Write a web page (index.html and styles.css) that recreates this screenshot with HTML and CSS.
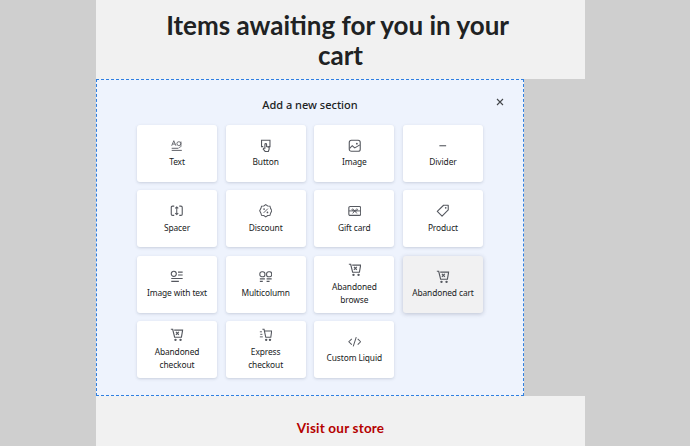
FILE: index.html
```html
<!DOCTYPE html>
<html lang="en">
<head>
<meta charset="utf-8">
<title>Add a new section</title>
<link rel="stylesheet" href="styles.css">
</head>
<body>
<svg class="defs" width="0" height="0" aria-hidden="true">
  <symbol id="cart" viewBox="0 0 16 16">
    <path d="M1 1.500h2.200L5.500 11h8l1.500-8.500H5" fill="none" stroke="currentColor" stroke-width="1.400"/>
    <path d="M7 4.500l3.500 3.500M10.500 4.500L7 8" fill="none" stroke="currentColor" stroke-width="1.300"/>
    <circle cx="6.500" cy="14" r="1.400" fill="currentColor"/>
    <circle cx="12.500" cy="14" r="1.400" fill="currentColor"/>
  </symbol>
</svg>
<main class="page">
  <header class="top">
    <h1 class="top-title">Items awaiting for you in your&nbsp;<br>cart</h1>
  </header>
  <section class="panel">
    <div class="panel-head">
      <h2 class="panel-title">Add a new section</h2>
      <button class="close" aria-label="Close"><svg viewBox="0 0 10 10" width="10" height="10"><path d="M2 2l6 6M8 2l-6 6" stroke="currentColor" stroke-width="1.100" fill="none"/></svg></button>
    </div>
    <div class="grid">
      <div class="card"><svg class="icon" viewBox="0 0 16 16"><path d="M2 8l2.500-6L7 8M3 6h3" fill="none" stroke="currentColor" stroke-width="1"/><circle cx="10.500" cy="5.500" r="2.300" fill="none" stroke="currentColor"/><path d="M13 3v5c0 1.500-1 2-2.500 2" fill="none" stroke="currentColor"/><path d="M2 11h8M2 13.500h12" stroke="currentColor" stroke-width="1.100"/></svg><span class="label">Text</span></div>
      <div class="card"><svg class="icon" viewBox="0 0 16 16"><path d="M5 9H3V1.500h10V9h-2" fill="none" stroke="currentColor" stroke-width="1.300"/><path d="M7 11V6.500a1 1 0 0 1 2 0V9l3 .8V12l-1 3H7.500L5 12l.5-1z" fill="none" stroke="currentColor" stroke-width="1.300"/></svg><span class="label">Button</span></div>
      <div class="card"><svg class="icon" viewBox="0 0 16 16"><rect x="1.500" y="1.500" width="13" height="13" rx="2.500" fill="none" stroke="currentColor" stroke-width="1.300"/><path d="M2 11l3-3 3 2.500 6-3.500" fill="none" stroke="currentColor" stroke-width="1.200"/><circle cx="10.500" cy="5.500" r="1.100" fill="currentColor"/></svg><span class="label">Image</span></div>
      <div class="card"><svg class="icon" viewBox="0 0 16 16"><path d="M4 8h8" stroke="currentColor" stroke-width="1.300"/></svg><span class="label">Divider</span></div>

      <div class="card"><svg class="icon" viewBox="0 0 16 16"><path d="M5 2.500H3a1.500 1.500 0 0 0-1.500 1.500v8A1.500 1.500 0 0 0 3 13.500h2M11 2.500h2A1.500 1.500 0 0 1 14.500 4v8a1.500 1.500 0 0 1-1.500 1.500h-2" fill="none" stroke="currentColor" stroke-width="1.300"/><path d="M8 3.500v9M6.200 5.300L8 3.500l1.800 1.800M6.200 10.700L8 12.500l1.800-1.800" fill="none" stroke="currentColor" stroke-width="1.200"/></svg><span class="label">Spacer</span></div>
      <div class="card"><svg class="icon" viewBox="0 0 16 16"><path d="M8 .8l2.300 1.500 2.700.2.700 2.600L15.200 8l-1.500 2.900-.7 2.600-2.700.2L8 15.200l-2.300-1.500-2.700-.2-.7-2.600L.8 8l1.500-2.900.7-2.600 2.700-.2z" fill="none" stroke="currentColor" stroke-width="1.200"/><path d="M10.500 5.500l-5 5" stroke="currentColor" stroke-width="1.100"/><circle cx="6" cy="6" r="1" fill="currentColor"/><circle cx="10" cy="10" r="1" fill="currentColor"/></svg><span class="label">Discount</span></div>
      <div class="card"><svg class="icon" viewBox="0 0 16 16"><rect x="1" y="3" width="14" height="10.500" rx="1.500" fill="none" stroke="currentColor" stroke-width="1.300"/><path d="M1 8.200h14" stroke="currentColor" stroke-width="1.100"/><path d="M8 8.200C6 5 4.200 5.600 4.800 7.200 5.100 8 7 8.200 8 8.200c2-3.200 3.800-2.600 3.200-1-.3.800-2.200 1-3.200 1zM5.500 11.200L8 8.200l2.500 3" fill="none" stroke="currentColor" stroke-width="1.100"/></svg><span class="label">Gift card</span></div>
      <div class="card"><svg class="icon" viewBox="0 0 16 16"><path d="M9 1.500h5.500V7l-7.300 7.500-5.700-5.700z" fill="none" stroke="currentColor" stroke-width="1.300" stroke-linejoin="round"/><circle cx="11.500" cy="4.500" r="1" fill="currentColor"/></svg><span class="label">Product</span></div>

      <div class="card"><svg class="icon" viewBox="0 0 16 16"><circle cx="4.500" cy="4.500" r="3" fill="none" stroke="currentColor" stroke-width="1.300"/><path d="M9.500 2.500H15M9.500 6H15M1.500 10H15M1.500 13.500h9" stroke="currentColor" stroke-width="1.300"/></svg><span class="label">Image with text</span></div>
      <div class="card"><svg class="icon" viewBox="0 0 16 16"><rect x="1" y="2" width="6" height="6" rx="2.500" fill="none" stroke="currentColor" stroke-width="1.300"/><rect x="9" y="2" width="6" height="6" rx="2.500" fill="none" stroke="currentColor" stroke-width="1.300"/><path d="M1 10.500h6M9 10.500h6M1 13.500h3.500M9 13.500h3.500" stroke="currentColor" stroke-width="1.300"/></svg><span class="label">Multicolumn</span></div>
      <div class="card"><svg class="icon"><use href="#cart"/></svg><span class="label">Abandoned browse</span></div>
      <div class="card is-active"><svg class="icon"><use href="#cart"/></svg><span class="label">Abandoned cart</span></div>

      <div class="card"><svg class="icon"><use href="#cart"/></svg><span class="label">Abandoned checkout</span></div>
      <div class="card"><svg class="icon" viewBox="0 0 16 16"><path d="M4 1.500h2L8 11h6l1-7.500H6.500" fill="none" stroke="currentColor" stroke-width="1.300"/><path d="M1 4.500h2.500M1.500 7.500H4M1 10.500h3.500" stroke="currentColor" stroke-width="1.100"/><circle cx="8.500" cy="14" r="1.400" fill="currentColor"/><circle cx="13" cy="14" r="1.400" fill="currentColor"/></svg><span class="label">Express checkout</span></div>
      <div class="card"><svg class="icon" viewBox="0 0 16 16"><path d="M4.500 4.500L1 8l3.500 3.500M11.500 4.500L15 8l-3.500 3.500M9.800 2.500L6.200 13.500" fill="none" stroke="currentColor" stroke-width="1.200"/></svg><span class="label">Custom Liquid</span></div>
    </div>
  </section>
  <footer class="bottom">
    <a class="store-link" href="#">Visit our store</a>
  </footer>
</main>
</body>
</html>
```
FILE: styles.css
```css
html, body {
  margin: 0;
  height: 100%;
  overflow: hidden;
  background: #cfcfcf;
}
.defs { position: absolute; }
.page {
  width: 489px;
  margin-left: 96px;
  display: flex;
  flex-direction: column;
}
.top {
  height: 79px;
  background: #f1f1f1;
  padding: 10px 40px 0;
  box-sizing: border-box;
}
.top-title {
  margin: 0;
  font: 700 26px/30px "Lato", sans-serif;
  letter-spacing: 0;
  color: #202223;
  text-align: center;
}
.panel {
  width: 428px;
  height: 317px;
  box-sizing: border-box;
  background: #eef3fd;
  border: 1px dashed #2f7fe0;
  padding: 14px 40px 0;
  font-family: "Noto Sans", sans-serif;
  color: #202223;
}
.panel-head {
  display: flex;
  justify-content: center;
  position: relative;
  height: 31px;
}
.panel-title {
  margin: 0;
  font-size: 11px;
  line-height: 22px;
  font-weight: 500;
}
.close {
  position: absolute;
  right: -22px;
  top: 3px;
  width: 10px;
  height: 10px;
  padding: 0;
  border: 0;
  background: none;
  color: #44474a;
  display: flex;
}
.grid {
  display: grid;
  grid-template-columns: repeat(4, 80px);
  grid-auto-rows: 57px;
  column-gap: 8.670px;
  row-gap: 8.400px;
}
.card {
  background: #fff;
  border-radius: 3px;
  box-shadow: 0 1px 3px rgba(70, 80, 110, .22);
  display: flex;
  flex-direction: column;
  align-items: center;
  justify-content: center;
  gap: 2px;
  text-align: center;
  padding: 0 8px;
}
.card.is-active {
  background: #f1f1f2;
  box-shadow: 0 1px 4px rgba(70, 80, 110, .3);
}
.icon {
  width: 13.500px;
  height: 13.500px;
  color: #55585f;
  flex: none;
  margin: 0;
}
.label {
  font-size: 8.400px;
  letter-spacing: -.1px;
  line-height: 13px;
  margin-top: 1px;
}
.bottom {
  height: 50px;
  background: #f1f1f1;
  text-align: center;
  padding-top: 23px;
  box-sizing: border-box;
}
.store-link {
  font: 700 13.500px/16px "Lato", sans-serif;
  letter-spacing: .2px;
  color: #b50000;
  text-decoration: none;
}
```
